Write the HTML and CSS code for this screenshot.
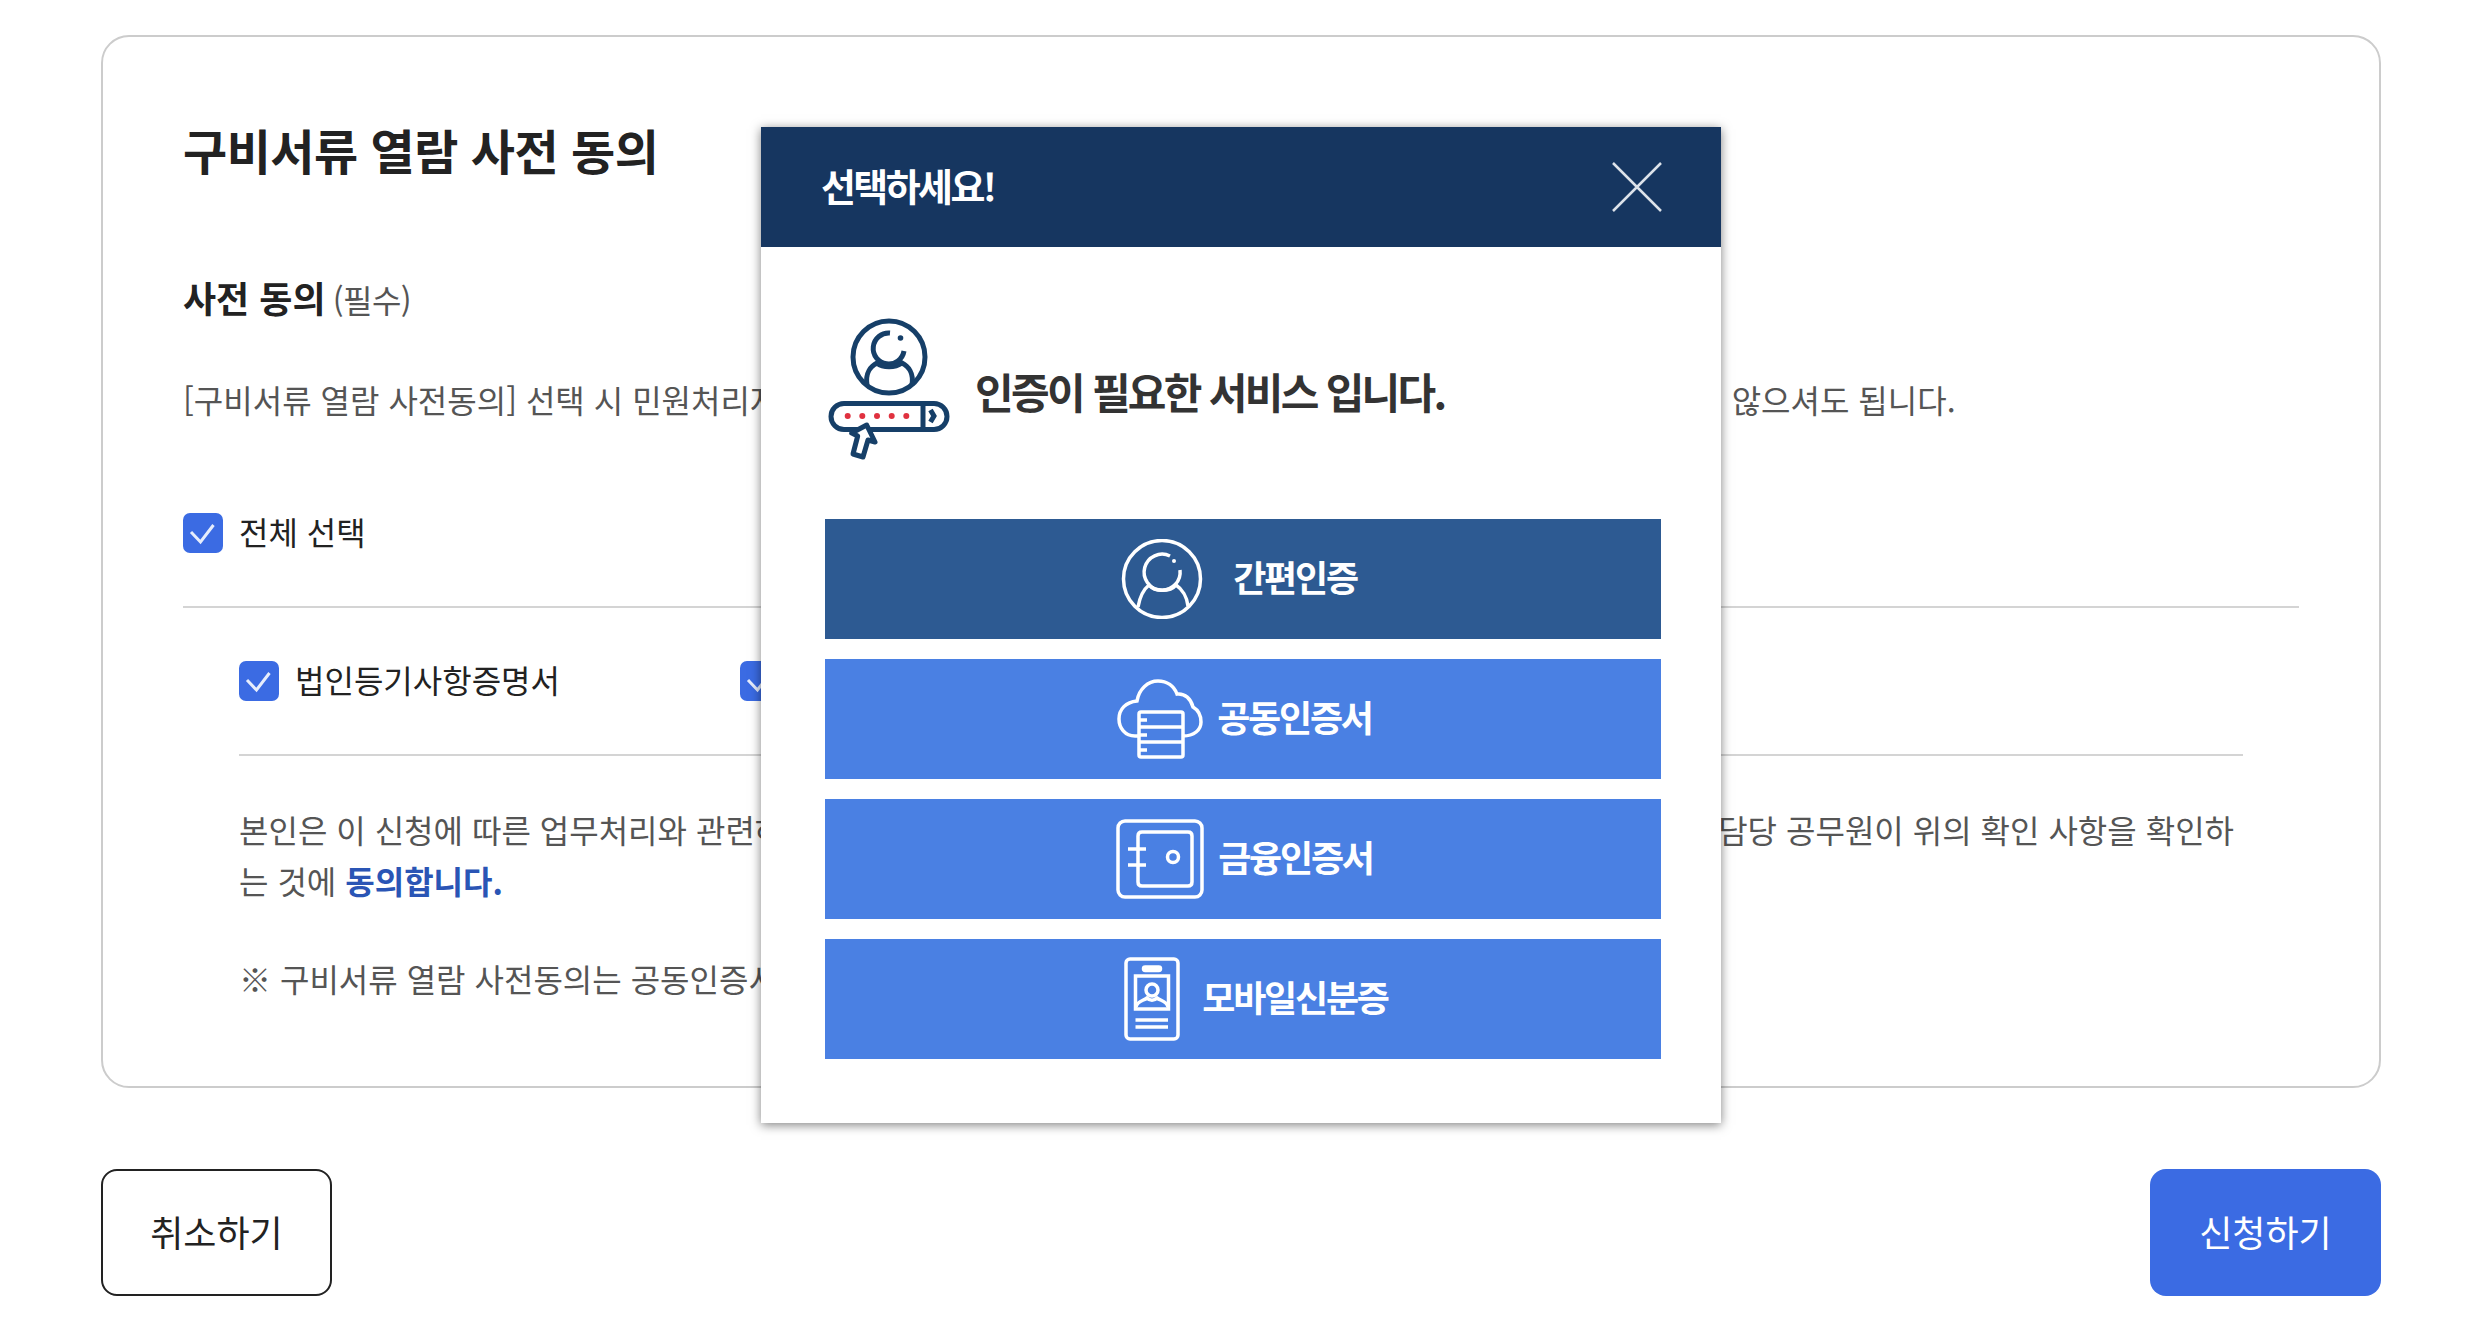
FILE: index.html
```html
<!DOCTYPE html>
<html lang="ko">
<head>
  <meta charset="UTF-8">
  <meta name="viewport" content="width=device-width, initial-scale=1.0">
  <title>구비서류 열람 사전 동의</title>
  <link rel="stylesheet" href="styles.css">
</head>
<body>
  <div class="page">
    <section class="card">
      <h1 class="card-title">구비서류 열람 사전 동의</h1>
      <h2 class="sub-title">사전 동의 <span class="required">(필수)</span></h2>
      <p class="desc">[구비서류 열람 사전동의] 선택 시 민원처리자가 시스템 상 구비서류를 직접 확인하므로, 해당 서류를 별도로 제출하지 않으셔도 됩니다.</p>

      <label class="check check-all">
        <span class="check-box"><svg viewBox="0 0 40 40"><path d="M8 19 L17.5 29 L30.5 12"/></svg></span>
        <span class="check-label">전체 선택</span>
      </label>

      <div class="agree">
        <div class="check-row">
          <label class="check">
            <span class="check-box"><svg viewBox="0 0 40 40"><path d="M8 19 L17.5 29 L30.5 12"/></svg></span>
            <span class="check-label">법인등기사항증명서</span>
          </label>
          <label class="check">
            <span class="check-box"><svg viewBox="0 0 40 40"><path d="M8 19 L17.5 29 L30.5 12"/></svg></span>
            <span class="check-label">사업자등록증명</span>
          </label>
        </div>
        <p class="agree-text">본인은 이 신청에 따른 업무처리와 관련하여, 「전자정부법」 제36조 1항에 따른 행정정보의 공동이용을 통하여 담당 공무원이 위의 확인 사항을 확인하는 것에 <strong class="agree-link">동의합니다.</strong></p>
        <p class="agree-text note">※ 구비서류 열람 사전동의는 공동인증서 등 본인 인증을 거쳐야 합니다.</p>
      </div>
    </section>

    <div class="actions">
      <button class="btn btn-cancel" type="button">취소하기</button>
      <button class="btn btn-submit" type="button">신청하기</button>
    </div>
  </div>

  <div class="modal">
    <div class="modal-head">
      <span class="modal-title">선택하세요!</span>
      <svg class="modal-close" viewBox="0 0 50 50"><path d="M1 1 L49 49 M49 1 L1 49"/></svg>
    </div>
    <div class="modal-body">
      <div class="modal-lead">
        <svg class="lead-icon" viewBox="0 0 124 146">
          <g class="lead-lines">
            <circle cx="62" cy="40" r="36"/>
            <path d="M63 16 A15.5 15.5 0 1 0 77 34"/>
            <path d="M40 68 C38 56 44 49 50 46 C56 51 68 51 75 46 C81 49 87 56 85 68"/>
            <rect x="4" y="86.5" width="116" height="26" rx="13"/>
            <path d="M96 86 V113"/>
            <path d="M103.5 93 L107 99 L103.5 105"/>
          </g>
          <circle class="lead-dot" cx="73.5" cy="21" r="2.8"/>
          <g class="lead-pass">
            <circle cx="20.7" cy="99" r="3"/>
            <circle cx="35.3" cy="99" r="3"/>
            <circle cx="50" cy="99" r="3"/>
            <circle cx="64.7" cy="99" r="3"/>
            <circle cx="79.3" cy="99" r="3"/>
          </g>
          <path class="lead-arrow" d="M39.7 108 L48 125 L41 123 L36 140 L26 137 L30.7 119 L24.7 116 Z"/>
        </svg>
        <span class="lead-text">인증이 필요한 서비스 입니다.</span>
      </div>

      <a class="auth-btn auth-simple">
        <svg class="auth-icon" width="82" height="80" viewBox="0 0 82 80">
          <circle cx="41" cy="40" r="38.5"/>
          <path d="M49 17 A18 18 0 1 0 59 31"/>
          <circle class="fill" cx="53" cy="22" r="2"/>
          <path d="M17 68 C19 57 23 50 28 46 C34 53 49 53 55 46 C61 50 66 58 67 67"/>
        </svg>
        <span class="auth-label">간편인증</span>
      </a>
      <a class="auth-btn auth-cert">
        <svg class="auth-icon" width="86" height="80" viewBox="0 0 86 80">
          <path d="M21 57 H18 C8 57 2 49 2 40 C2 30 9 23 20 22 C22 10 31 2 41 2 C50 2 57 7 60 15 C68 14 74 20 76 28 C81 31 84 37 84 43 C84 51 77 57 66 57"/>
          <rect x="22" y="33" width="44" height="45" rx="2"/>
          <path d="M22 48 H66 M22 63 H66 M22 41 H30 M22 56 H30 M22 71 H30"/>
        </svg>
        <span class="auth-label">공동인증서</span>
      </a>
      <a class="auth-btn auth-cert">
        <svg class="auth-icon" width="88" height="80" viewBox="0 0 88 80">
          <rect x="2" y="2" width="84" height="76" rx="7"/>
          <path d="M22 30 V17 Q22 13 26 13 H72 Q76 13 76 17 V63 Q76 67 72 67 H26 Q22 67 22 63 V46 M22 30 V46"/>
          <path d="M12 30 H30 M12 46 H30"/>
          <circle cx="57" cy="38" r="5.5"/>
        </svg>
        <span class="auth-label">금융인증서</span>
      </a>
      <a class="auth-btn auth-mobile">
        <svg class="auth-icon" width="56" height="84" viewBox="0 0 56 84">
          <rect x="2" y="2" width="52" height="80" rx="4"/>
          <rect x="19.5" y="10" width="17" height="3.5" rx="1.7"/>
          <rect x="11.5" y="19" width="33" height="33"/>
          <circle cx="28" cy="33" r="6"/>
          <path d="M12 50 C13 44 19 44 23 41 C26 44 30 44 33 41 C37 44 43 44 44 50"/>
          <path d="M11.5 63 H44 M11.5 70 H44"/>
        </svg>
        <span class="auth-label">모바일신분증</span>
      </a>
    </div>
  </div>
</body>
</html>
```

FILE: styles.css
```css
* {
  box-sizing: border-box;
}

body {
  margin: 0;
  background: #fff;
  font-family: "Noto Sans CJK KR", "Noto Sans", sans-serif;
  font-size: 32px;
  color: #555;
}

.page {
  padding: 35px 95px 0 101px;
}

/* 뒤쪽 카드 */
.card {
  height: 1053px;
  padding: 80px 80px 0;
  border: 2px solid #ccc;
  border-radius: 28px;
}

.card-title {
  margin: 0;
  font-size: 48px;
  line-height: 64px;
  font-weight: 700;
  letter-spacing: -0.5px;
  color: #222;
}

.sub-title {
  margin: 90px 0 0;
  font-size: 36px;
  line-height: 52px;
  font-weight: 700;
  color: #222;
}

.required {
  margin-left: -3px;
  font-size: 32px;
  font-weight: 400;
  letter-spacing: -0.5px;
  color: #555;
}

.desc {
  margin: 48px 0 0;
  line-height: 52px;
  white-space: nowrap;
}

.check {
  display: flex;
  align-items: center;
  gap: 16px;
  color: #222;
}

.check-label {
  padding-bottom: 4px;
}

.check-all {
  height: 100px;
  padding-top: 2px;
  padding-bottom: 50px;
  border-bottom: 2px solid #d4d4d4;
  margin-top: 83px;
}

.check-box {
  width: 40px;
  height: 40px;
  border-radius: 7px;
  background: #3b6be3;
  flex: none;
}

.check-box svg {
  display: block;
  width: 40px;
  height: 40px;
  fill: none;
  stroke: #e6edfc;
  stroke-width: 3;
}

.agree {
  margin: 0 56px;
}

.check-row {
  display: flex;
  align-items: center;
  height: 148px;
  border-bottom: 2px solid #d4d4d4;
}

.check-row .check {
  width: 501px;
}

.agree-text {
  margin: 48px 0 0;
  line-height: 51px;
  word-break: break-all;
}

.agree-link {
  color: #2a55b5;
  font-weight: 700;
}

.note {
  margin-top: 47px;
  white-space: nowrap;
}

.actions {
  display: flex;
  justify-content: space-between;
  margin-top: 81px;
}

.btn {
  width: 231px;
  height: 127px;
  padding: 0 0 4px;
  border-radius: 16px;
  font-family: inherit;
  font-size: 36px;
}

.btn-cancel {
  border: 2px solid #222;
  background: #fff;
  color: #222;
}

.btn-submit {
  border: 0;
  background: #3b6be3;
  color: #fff;
}

/* 인증 선택 팝업 */
.modal {
  position: absolute;
  left: 761px;
  top: 127px;
  width: 960px;
  height: 996px;
  background: #fff;
  box-shadow: 0 2px 10px rgba(0, 0, 0, 0.5);
}

.modal-head {
  display: flex;
  align-items: center;
  justify-content: space-between;
  height: 120px;
  padding: 0 59px 0 60px;
  background: #163660;
}

.modal-title {
  padding-bottom: 6px;
  font-size: 38px;
  font-weight: 700;
  letter-spacing: -2.6px;
  color: #fff;
}

.modal-close {
  width: 50px;
  height: 50px;
}

.modal-close path {
  stroke: #dde3ea;
  stroke-width: 2.5;
  fill: none;
}

.modal-body {
  padding: 70px 60px 0 64px;
}

.modal-lead {
  display: flex;
  align-items: center;
  gap: 24px;
  height: 146px;
  padding-left: 2px;
  margin-bottom: 56px;
}

.lead-icon {
  width: 124px;
  height: 146px;
  flex: none;
}

.lead-lines {
  fill: none;
  stroke: #163f68;
  stroke-width: 5;
}

.lead-dot {
  fill: #163f68;
}

.lead-pass {
  fill: #e0313f;
}

.lead-arrow {
  fill: #fff;
  stroke: #163f68;
  stroke-width: 5;
  stroke-linejoin: round;
}

.lead-text {
  font-size: 42px;
  font-weight: 700;
  letter-spacing: -2.7px;
  color: #333;
}

.auth-btn {
  display: flex;
  align-items: center;
  justify-content: center;
  gap: 14px;
  width: 836px;
  height: 120px;
  margin-bottom: 20px;
  background: #4a80e3;
}

.auth-simple {
  gap: 30px;
  padding-right: 8px;
  background: #2d5a92;
}

.auth-cert {
  padding-left: 3px;
}

.auth-mobile {
  gap: 22px;
  padding-left: 26px;
}

.auth-icon {
  flex: none;
  fill: none;
  stroke: #fff;
  stroke-width: 3.5;
}

.auth-icon .fill {
  fill: #fff;
  stroke: none;
}

.auth-label {
  padding-bottom: 6px;
  font-size: 36px;
  font-weight: 700;
  letter-spacing: -2.2px;
  color: #fff;
}
```
